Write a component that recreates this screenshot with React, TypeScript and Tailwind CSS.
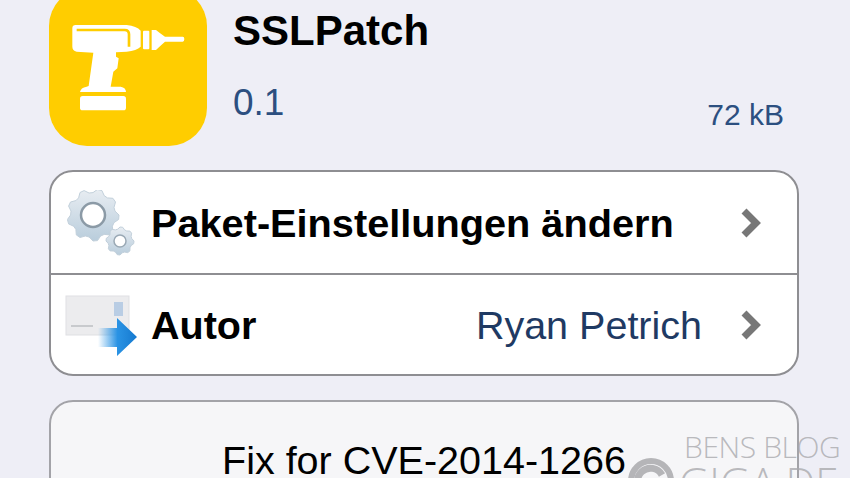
// App.tsx
import React from "react";

const DrillIcon = () => (
  <svg viewBox="57 -36 474 474" className="w-[158px] h-[158px]">
    <g fill="#fff">
      <path d="M127 85 Q127 75 137 75 L290 75 Q320 78 332 92 L332 140 Q320 152 290 155 L258 157 L258 170 L266 175 L262 205 L250 215 L242 260 L272 260 Q288 263 288 276 L150 276 Q152 263 170 260 L176 258 L190 158 L140 155 Q127 152 127 140 Z" />
      <rect x="150" y="288" width="138" height="43" rx="8" />
      <rect x="339" y="92" width="19" height="56" rx="3" />
      <path d="M365 90 L378 90 Q390 100 405 110 L458 110 Q463 110 463 117 Q463 125 458 125 L405 125 Q390 138 378 150 L365 150 Z" />
    </g>
    <path d="M140 90 L284 90 Q297 90 297 103 L297 140" fill="none" stroke="#ffcd00" strokeWidth="8" />
  </svg>
);

const gearPath = (cx: number, cy: number, r: number, teeth: number) => {
  // toothed outline around a center
  const pts: string[] = [];
  for (let i = 0; i < teeth * 4; i++) {
    const a = (i / (teeth * 4)) * Math.PI * 2;
    const rad = i % 4 < 2 ? r : r * 0.86;
    pts.push(`${(cx + Math.cos(a) * rad).toFixed(1)},${(cy + Math.sin(a) * rad).toFixed(1)}`);
  }
  return `M${pts.join(" L")} Z`;
};

const GearsIcon = () => (
  <svg viewBox="0 0 72 66" className="w-[72px] h-[66px] shrink-0">
    <defs>
      <linearGradient id="gear" x1="0" y1="0" x2="0" y2="1">
        <stop offset="0" stopColor="#e8edf2" />
        <stop offset="1" stopColor="#b9cddc" />
      </linearGradient>
    </defs>
    <path d={gearPath(26, 25, 26, 9)} fill="url(#gear)" stroke="#c2d0db" strokeWidth="1" />
    <circle cx="26" cy="25" r="12" fill="#fff" stroke="#8b9aa6" strokeWidth="2.5" />
    <path d={gearPath(53, 51, 14, 8)} fill="url(#gear)" stroke="#c2d0db" strokeWidth="1" />
    <circle cx="53" cy="51" r="6" fill="#fff" stroke="#9aa9b5" strokeWidth="1.5" />
  </svg>
);

const ForwardIcon = () => (
  <svg viewBox="0 0 72 64" className="w-[72px] h-[64px] shrink-0">
    <defs>
      <linearGradient id="arrow" x1="0" y1="0" x2="1" y2="0">
        <stop offset="0" stopColor="#2f97e6" stopOpacity="0" />
        <stop offset="0.5" stopColor="#2a93e4" />
        <stop offset="1" stopColor="#1579cf" />
      </linearGradient>
    </defs>
    <rect x="1" y="3" width="63" height="39" fill="#ececee" stroke="#dfe0e3" />
    <rect x="49" y="9" width="9" height="14" fill="#b9cde4" />
    <rect x="6" y="32" width="22" height="2" fill="#c8cacd" />
    <path d="M33 35 L52 35 L52 25 L72 44 L52 63 L52 54 L33 54 Z" fill="url(#arrow)" />
  </svg>
);

const Chevron = () => (
  <svg viewBox="0 0 24 32" className="w-6 h-8 shrink-0">
    <path d="M6 4 L18 16 L6 28" fill="none" stroke="#777777" strokeWidth="7" />
  </svg>
);

const GigaLogo = () => (
  <svg viewBox="0 0 46 46" className="absolute left-[628px] top-[458px] h-[46px] w-[46px]">
    <circle cx="23" cy="23" r="20" fill="none" stroke="#a9a9ad" strokeOpacity="0.85" strokeWidth="6" />
    <path d="M34 17 A13 13 0 1 0 35 27 L24 27" fill="none" stroke="#a9a9ad" strokeOpacity="0.85" strokeWidth="7" />
  </svg>
);

export default function App() {
  return (
    <div
      className="relative h-[478px] w-[850px] overflow-hidden bg-[#eeeef6] text-black"
      style={{ fontFamily: '"Liberation Sans", Arial, sans-serif' }}
    >
      <div className="-mt-3 pl-[49px] pr-[51px]">
        {/* HEADER */}
        <div className="flex">
          <div className="h-[158px] w-[158px] shrink-0 rounded-[38px] bg-[#ffcd00]">
            <DrillIcon />
          </div>
          <div className="ml-[26px] flex-1">
            <h1 className="mt-[19px] text-[42px] leading-[48px] font-bold">SSLPatch</h1>
            <div className="mt-[26px] flex items-end justify-between">
              <span className="text-[37px] leading-[44px] text-[#2c4f80]">0.1</span>
              <span className="mb-[-7px] mr-[15px] text-[30px] leading-[34px] text-[#2c4f80]">72 kB</span>
            </div>
          </div>
        </div>

        {/* SETTINGS CARD */}
        <div className="mt-6 rounded-[24px] border-2 border-[#8e8e92] bg-white">
          <div className="flex h-[101px] items-center pl-[16px] pr-[35px]">
            <GearsIcon />
            <span className="ml-[12px] flex-1 text-[39.7px] leading-[44px] font-bold">Paket-Einstellungen ändern</span>
            <Chevron />
          </div>
          <div className="flex h-[101px] items-center border-t-2 border-[#8e8e92] pl-[14px] pr-[35px]">
            <ForwardIcon />
            <span className="ml-[14px] flex-1 text-[39.5px] leading-[44px] font-bold">Autor</span>
            <span className="mr-[36px] text-[39.5px] leading-[44px] text-[#1f3a63]">Ryan Petrich</span>
            <Chevron />
          </div>
        </div>

        {/* DESCRIPTION CARD */}
        <div className="mt-6 h-[120px] rounded-[24px] border-2 border-[#a3a3a8] bg-[#f6f6f8] pt-[40px] text-center text-[39.5px] leading-[36px]">
          Fix for CVE-2014-1266
        </div>
      </div>

      {/* WATERMARK */}
      <div className="absolute left-[684px] top-[433px] text-[30px] leading-[28px] font-light tracking-[-0.4px] text-[#a9a9ad]/80" style={{ fontFamily: '"Open Sans", sans-serif' }}>
        BENS BLOG
      </div>
      <div className="absolute left-[679px] top-[461px] text-[42px] leading-[42px] font-light text-[#a9a9ad]/80" style={{ fontFamily: '"Open Sans", sans-serif' }}>
        GIGA.DE
      </div>
      <GigaLogo />
    </div>
  );
}
